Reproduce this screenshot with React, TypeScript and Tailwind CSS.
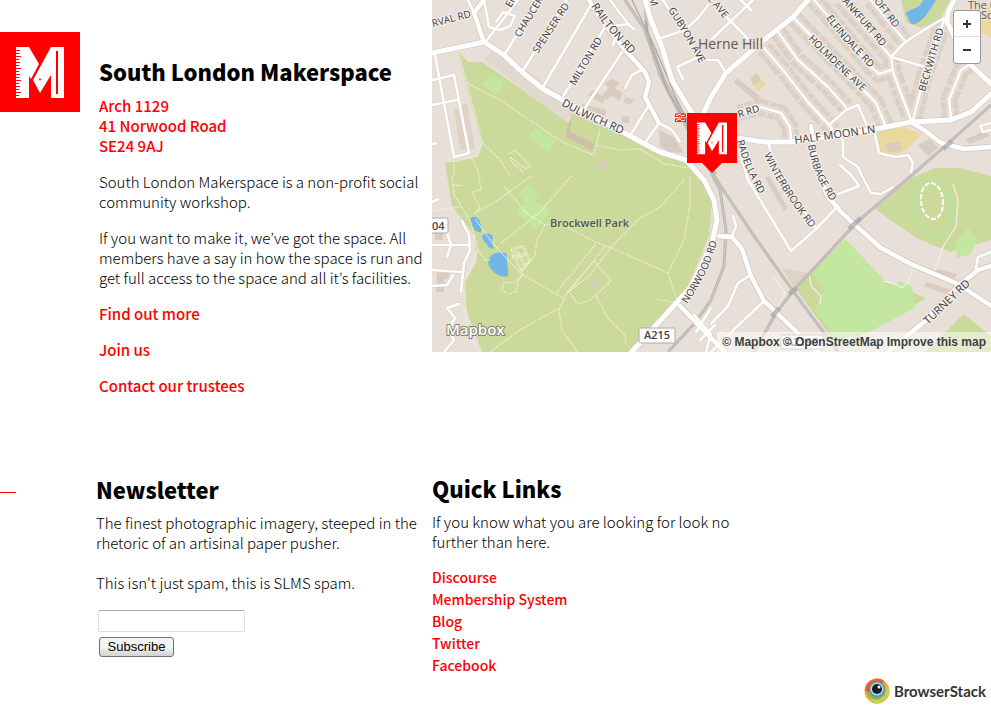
import React from "react";

const sans = "font-['Noto_Sans_CJK_JP','Open_Sans',sans-serif]";

function MakerMark({ className }: { className?: string }) {
  return (
    <svg viewBox="0 0 80 80" className={className} aria-hidden="true">
      <rect width="80" height="80" fill="#ff0000" />
      <path d="M16 15H29L39 32L31 47L29 44V66H16Z" fill="#fff" />
      <path d="M51 15H64V66H51V43L40 61L33 48Z" fill="#fff" />
      <path d="M57 19V62" stroke="#ff0000" strokeWidth="2" />
      <path
        d="M16 18.5h4M16 21.5h3M16 24.5h5M16 27.5h3M16 30.5h4M16 33.5h3M16 36.5h5M16 39.5h3M16 42.5h4M16 45.5h3M16 48.5h5M16 51.5h3M16 54.5h4M16 57.5h3M16 60.5h5M16 63.5h3"
        stroke="#ff0000"
        strokeWidth="1.2"
      />
      <circle cx="40" cy="47.5" r="1" fill="#ff0000" />
    </svg>
  );
}

/* Streets lined with houses; the same lines are reused for blocks and roads. */
const terraces = [
  "M764 48L783 70L808 102L829 125L833 130",
  "M778 32L798 60L828 87L846 107",
  "M794 18L854 80L876 103L886 127",
  "M814 0L829 17L871 67L879 74L891 70",
  "M841 0L891 57",
  "M871 0L904 40",
  "M913 120L924 77L944 20",
  "M891 57L893 72L911 120",
  "M738 113L761 107L781 113L790 127L791 140",
  "M951 118L949 100L961 70L969 65",
];

const streets = [
  "M829 125L846 110L858 105L868 128",
  "M891 57L904 43L924 30L944 18",
  "M891 57L926 67",
  "M504 55L539 0",
  "M522 72L567 0",
  "M543 87L592 3",
  "M562 98L605 27L629 24",
  "M585 108L622 52",
  "M630 136L649 105",
  "M645 143L659 123",
  "M659 123L672 130L680 142",
  "M625 88L632 75L641 70",
  "M610 0L629 25L634 29M613 45L616 36",
  "M435 55L454 157L469 153L454 75L432 80M432 105L457 100",
  "M484 0L489 27L500 30L510 26L515 16L503 12L496 22",
  "M518 0L487 40M474 13L468 0",
  "M661 38L685 30L699 17L712 0M663 0L672 14L699 58",
  "M677 67L698 57M677 67L683 79M698 60L718 60L726 73",
  "M711 40L753 0M717 7L749 40M741 0L751 10",
  "M874 130L879 153L895 157L908 155L913 163L911 172",
  "M831 130L843 140L843 157L858 167L862 176L871 193L881 194L893 187",
  "M768 141L774 165L816 229",
  "M738 147L748 180L791 251L816 229L838 206",
  "M838 194L859 186L852 176L840 165",
  "M732 236L736 226L733 216",
  "M749 276L738 283L728 306L711 324",
  "M764 301L724 339L711 352",
  "M462 221L469 235L470 250L464 263L461 292M432 245L470 245M432 270L461 272",
  "M447 232L451 245L447 257M432 286L447 285L453 275",
  "M459 304L447 308L455 318L448 330L454 340L444 352",
  "M432 144L436 143M432 202L438 199",
  "M694 315L711 334L706 352M711 308L696 332M700 340L715 325",
  "M976 268L978 257L991 252",
  "M991 123L980 126L983 132L991 130",
];

const avenues = [
  "M484 0L474 13L484 42",
  "M589 0L599 17L625 50L645 72L649 82L645 97L659 123",
  "M719 236L732 237L742 249L751 276L764 301L778 314L826 360",
  "M811 126L816 165L827 195L840 211L854 224L881 248L911 264L958 284L991 306",
  "M880 358L924 322L958 286L978 270L991 266",
  "M911 122L924 130L941 143L964 149L991 147",
  "M680 306L711 338L725 352",
];

const mains = [
  "M432 53L484 42L504 55L522 72L543 89L570 104L630 136L660 152L686 160L706 162",
  "M645 0L651 20L662 47L672 80L692 113L706 130L710 150",
  "M688 162L704 180L714 200L717 220L712 243L690 288L628 356",
  "M704 112L711 97L726 73L764 40L793 17L808 0",
  "M737 138L764 142L791 142L871 130L911 122L951 120L971 112L991 94",
  "M954 0L948 12L947 22L956 40L971 65L991 84",
];

const rails = [
  "M625 0L645 30L660 75L688 130L714 176L752 233L793 291L838 352",
  "M645 0L647 32L664 80L692 134L720 190L726 230L724 266L711 300L694 324L668 352",
  "M991 105L944 147L911 176L858 221L793 291L776 313L754 352",
];

const footpaths = [
  "M458 51L467 83L482 142L500 160L510 176M467 83L500 100L562 142L593 155",
  "M482 142L478 156L454 162L454 176M472 159L478 170L481 190L472 192L480 208L474 214L498 200L512 190L531 176",
  "M505 187L525 212L545 225M571 176L540 212L500 244",
  "M432 211L459 207M453 185L463 186M452 176L454 195L470 220L478 250L472 265L465 280L466 330L480 352",
  "M476 220L490 240L510 262L523 275L563 298M478 250L485 260L491 260",
  "M523 275L514 282L504 283L502 290L508 294L516 292L518 282L523 270L535 255L537 240L545 225L563 225L595 242L612 248L668 273L678 303L656 299M668 273L684 240L690 205L690 176M684 180L660 207L640 218L612 246L590 275L567 293L559 310L562 330L577 352",
  "M595 245L556 293M605 247L569 292L578 304L590 300L611 281L594 261L567 292M596 296L608 318L625 335L626 345M559 308L520 330L490 352",
  "M600 130L596 145L620 150L640 149L665 164L690 168M593 155L597 145",
  "M509 154L515 150L530 166L526 169L510 157L513 163L523 172",
];

const parkGreens = [
  "M457 50L468 62L482 62L520 88L568 123L572 113L600 124L630 137L660 153L684 162L692 167L704 184L712 204L709 236L688 286L628 352L482 352L466 309L464 283L477 262L475 236L452 206L445 163L477 157L482 145Z",
  "M912 178L875 209L918 239L950 252L991 240V176L960 168L935 168Z",
  "M845 239L810 274L797 290L833 340L860 336L926 298L885 281Z",
  "M964 314L991 336V352H925Z",
  "M901 0L906 22L921 28L940 20L950 0Z",
];

const lawns = [
  "M492 75L504 82L495 96L482 84Z",
  "M535 128L556 140L549 153L529 137Z",
  "M528 184L539 193L534 201L551 210L537 230L516 213L525 203L519 193Z",
  "M845 239L812 273L825 288L815 311L834 336L869 332L915 308L912 286L900 281L890 287L878 275Z",
  "M968 227L977 240L971 254L957 258L955 244Z",
];

const blocks = [
  "M612 79L620 83L615 88L623 93L619 101L611 96L607 100L602 96L608 88L604 83Z",
  "M592 90L606 98L602 104L588 95ZM582 104L607 110L605 116L580 108Z",
  "M625 97L634 100L630 105L624 102ZM621 117L629 116L629 123L622 123Z",
  "M659 130L674 137L684 153L670 152L660 146Z",
  "M886 144L900 142L901 151L888 152Z",
  "M737 78L760 96L757 102L734 83ZM751 76L758 75L761 81L753 85Z",
  "M918 145L930 139L938 148L928 156Z",
  "M937 269L957 274L955 278L933 274ZM927 282L955 291L952 296L924 286Z",
  "M765 178L769 176L788 208L784 211ZM966 139L985 131L990 136L970 144Z",
  "M594 279L601 282L596 288L591 285ZM598 163L607 160L604 171L598 169Z",
  "M435 230H443V240H435ZM437 273H449V279H444V292H436Z",
];

type Label = { d: string; text: string; size?: number };

const labels: Label[] = [
  { d: "M433 27L471 17", text: "RVAL RD" },
  { d: "M511 8L522 -12", text: "EF" },
  { d: "M520 38L548 -8", text: "CHAUCER" },
  { d: "M538 54L572 2", text: "SPENSER RD" },
  { d: "M575 86L607 32", text: "MILTON RD" },
  { d: "M591 6C603 26 617 40 636 60", text: "RAILTON RD", size: 11 },
  { d: "M561 105C580 117 600 124 632 139", text: "DULWICH RD", size: 11 },
  { d: "M649 -2L653 12", text: "M" },
  { d: "M668 10C680 28 689 43 704 72", text: "GUBYON AVE" },
  { d: "M704 -5L735 32", text: "LL AVE" },
  { d: "M808 39C825 57 842 73 868 97", text: "HOLMDENE AVE" },
  { d: "M826 18C836 34 855 51 879 78", text: "ELFINDALE RD" },
  { d: "M838 -3L888 54", text: "RANKFURT RD" },
  { d: "M870 -4L902 38", text: "ROFT RD" },
  { d: "M925 92L945 25", text: "BECKWITH RD" },
  { d: "M739 118L770 108", text: "R RD" },
  { d: "M795 144L881 132", text: "HALF MOON LN", size: 11 },
  { d: "M737 141C742 160 750 181 768 208", text: "RADELLA RD" },
  { d: "M764 155C774 177 789 201 815 234", text: "WINTERBROOK RD" },
  { d: "M808 145C811 165 818 184 840 214", text: "BURBAGE RD" },
  { d: "M687 304C703 281 715 257 721 225", text: "NORWOOD RD" },
  { d: "M928 325L974 281", text: "TURNEY RD", size: 11 },
];

function StreetMap() {
  return (
    <svg
      viewBox="432 0 559 352"
      preserveAspectRatio="xMidYMid slice"
      className="block h-full w-full"
      role="img"
      aria-label="Map of Herne Hill and Brockwell Park"
    >
      <rect x="432" width="559" height="352" fill="#e8e0d8" />
      <path d="M484 60L495 48L600 122L571 115L566 122L525 90Z" fill="#e1d8ce" />
      <path d="M782 268L808 273L795 290ZM454 110L467 103L475 149L460 150Z" fill="#ded3c4" />
      <path d="M750 80L756 72L766 85L758 92ZM874 130L903 127L922 134L911 145L901 153L882 157ZM978 12L991 6V38L983 33Z" fill="#e9d99c" />
      {parkGreens.map((d) => (
        <path key={d} d={d} fill="#cbd99b" />
      ))}
      {lawns.map((d) => (
        <path key={d} d={d} fill="#c3e79f" />
      ))}
      <path d="M568 124L571 120L570 132L593 143L597 136L592 150L565 137Z" fill="#cfbfa9" />
      <ellipse cx="933" cy="209" rx="18" ry="29" fill="none" stroke="#bfe09c" strokeWidth="5" transform="rotate(-10 933 209)" />
      <ellipse cx="932" cy="201" rx="11" ry="18" fill="none" stroke="#fff" strokeWidth="2" strokeDasharray="5 2" transform="rotate(-6 932 201)" />
      <path
        d="M470 219C474 214 480 218 480 223C484 231 481 234 476 231C473 228 472 226 470 219ZM482 236C487 231 493 234 493 238C491 243 494 246 493 249L488 247C487 242 482 241 482 236ZM488 261C491 252 500 251 506 253C508 259 506 263 508 268V276C500 279 488 270 488 261ZM905 14C913 6 918 11 923 0L936 0C931 8 925 20 915 24C908 26 910 16 905 14Z"
        fill="#73b6e6"
      />
      {terraces.map((d) => (
        <path key={d} d={d} fill="none" stroke="#dcd0c4" strokeWidth="17" strokeDasharray="7 1 9 1 12 2" />
      ))}
      {terraces.map((d) => (
        <path key={d} d={d} fill="none" stroke="#e8e0d8" strokeWidth="7" />
      ))}
      {blocks.map((d) => (
        <path key={d} d={d} fill="#d9cbbf" />
      ))}
      <path d="M511 249L523 246L530 261L521 270Z" fill="none" stroke="#f2f2d9" strokeWidth="3" strokeDasharray="1 1.5" />
      <path d="M516 251L525 265M512 257L527 254" fill="none" stroke="#f2f2d9" strokeWidth="4" strokeDasharray="1 1.5" />
      {footpaths.map((d) => (
        <path key={d} d={d} fill="none" stroke="#f4f4df" strokeWidth="1.4" strokeDasharray="1.3 1.3" />
      ))}
      <path d="M953 184L958 200L956 226L943 247L935 270M883 281L895 284L902 288L908 282L913 270M809 274L811 286L821 296L820 304M773 277L785 293L775 313" fill="none" stroke="#f1efe4" strokeWidth="1.3" />
      {rails.map((d) => (
        <g key={d} fill="none">
          <path d={d} stroke="#b9b5b1" strokeWidth="3" />
          <path d={d} stroke="#d8d3ce" strokeWidth="0.8" />
        </g>
      ))}
      <path d="M645 20L652 48L668 92L690 128L716 174M632 0L656 50L676 98L698 142" fill="none" stroke="#aaa7a5" strokeWidth="1.2" />
      <g fill="none" strokeLinejoin="round" strokeLinecap="round">
        {[...streets, ...terraces].map((d) => (
          <path key={d} d={d} stroke="#d8cfc6" strokeWidth="3.8" />
        ))}
        {[...avenues, ...mains].map((d) => (
          <path key={d} d={d} stroke="#d5ccc3" strokeWidth="6.4" />
        ))}
        {[...streets, ...terraces].map((d) => (
          <path key={d} d={d} stroke="#fff" strokeWidth="2.6" />
        ))}
        {avenues.map((d) => (
          <path key={d} d={d} stroke="#fff" strokeWidth="4.4" />
        ))}
        {mains.map((d) => (
          <path key={d} d={d} stroke="#fff" strokeWidth="5" />
        ))}
      </g>
      <path d="M849 229L861 218M772 317L779 308M789 294L797 288M943 149L952 141" stroke="#aaa" strokeOpacity="0.75" strokeWidth="5" />
      <g
        className="font-['Open_Sans','Noto_Sans',sans-serif]"
        fill="#38373a"
        stroke="#f6f2ee"
        strokeOpacity="0.9"
        strokeWidth="2.5"
        paintOrder="stroke"
        strokeLinejoin="round"
        fontWeight="500"
      >
        {labels.map((l, i) => (
          <g key={l.text}>
            <path id={`road-${i}`} d={l.d} fill="none" stroke="none" />
            <text fontSize={l.size ?? 10}>
              <textPath href={`#road-${i}`}>{l.text}</textPath>
            </text>
          </g>
        ))}
        <text x="698" y="49" fontSize="14" fill="#6a5849" stroke="#e8e0d8" fontWeight="400">Herne Hill</text>
        <text x="550" y="227" fontSize="11" fontWeight="600" fill="#555" stroke="#d3dfa9">Brockwell Park</text>
        <text x="968" y="9" fontSize="11" fill="#6a5849" stroke="#e8e0d8">The C</text>
        <text x="981" y="19" fontSize="11" fill="#6a5849" stroke="#e8e0d8">Sc</text>
      </g>
      <g className="font-['Open_Sans','Noto_Sans',sans-serif]" fontSize="11" fontWeight="600" fill="#444">
        <rect x="639" y="328" width="36" height="15" rx="1.5" fill="#fff" stroke="#aaa" />
        <text x="644" y="339">A215</text>
        <rect x="420" y="218" width="28" height="15" rx="1.5" fill="#fff" stroke="#aaa" />
        <text x="432" y="230">04</text>
        <rect x="781" y="335" width="42" height="14" rx="1.5" fill="#fff" stroke="#aaa" />
        <text x="786" y="346">A2199</text>
      </g>
      <path d="M675 113.500H686V117H675ZM675 118.500H686V122H675Z" fill="#ff2414" />
      <path d="M676 115.500L680 114.500L682 116L685 115M676 120.500L680 119L682 121L685 120" stroke="#fff" fill="none" />
      <text
        x="446"
        y="335"
        fontSize="15"
        fontWeight="600"
        fill="#fff"
        stroke="#7f8270"
        strokeWidth="2"
        strokeLinejoin="round"
        paintOrder="stroke"
        className="font-['Open_Sans','Noto_Sans',sans-serif]"
      >
        Mapbox
      </text>
    </svg>
  );
}

function Marker() {
  return (
    <div className="absolute top-[113px] left-1/2 ml-[-25px] flex w-[50px] flex-col items-center">
      <MakerMark className="block size-[50px]" />
      <svg viewBox="0 0 20 10" className="block h-[10px] w-5" aria-hidden="true">
        <path d="M0 0H20L10 10Z" fill="#ff0000" />
      </svg>
    </div>
  );
}

function BrowserStack() {
  return (
    <a href="#browserstack" className="flex items-center gap-1 font-['Lato',sans-serif] text-[15px] leading-7 font-bold text-[#333]">
      <svg viewBox="0 0 26 26" className="size-[26px]" aria-hidden="true">
        <circle cx="13" cy="13" r="12.500" fill="#f3aa3c" />
        <path d="M1 13A12 12 0 0 1 20 3L13 13Z" fill="#e8663f" />
        <path d="M25 10A12.500 12.500 0 0 1 5 23L13 12Z" fill="#c9cf52" />
        <circle cx="12" cy="12" r="9.500" fill="#e4593a" />
        <path d="M3 15A9.500 9.500 0 0 0 21 14L12 10Z" fill="#8dbb5c" />
        <circle cx="13" cy="11.500" r="8" fill="#3fa9b5" />
        <circle cx="13" cy="11" r="6.500" fill="#b9dce6" />
        <circle cx="13" cy="11" r="5" fill="#1d1b22" />
        <circle cx="15" cy="9" r="1.500" fill="#fff" />
      </svg>
      BrowserStack
    </a>
  );
}

const quickLinks = ["Discourse", "Membership System", "Blog", "Twitter", "Facebook"];
const heading = "text-[22px] leading-8 font-black text-black";
const link = "font-medium text-[#ff0000]";

export default function App() {
  return (
    <main className={`${sans} bg-white text-[15px] leading-5 font-light text-black`}>
      <section className="flex">
        <MakerMark className="mt-8 block size-20 shrink-0" />
        <div className="w-[352px] shrink-0 pt-[55px] pr-2 pl-[19px]">
          <h1 className={heading}>South London Makerspace</h1>
          <address className={`mt-[9px] not-italic ${link}`}>
            Arch 1129
            <br />
            41 Norwood Road
            <br />
            SE24 9AJ
          </address>
          <p className="mt-4">South London Makerspace is a non-profit social community workshop.</p>
          <p className="mt-4">
            If you want to make it, we’ve got the space. All members have a say in how the space is run and get full
            access to the space and all it’s facilities.
          </p>
          <nav className="mt-4 flex flex-col items-start gap-4">
            <a href="#about" className={link}>Find out more</a>
            <a href="#join" className={link}>Join us</a>
            <a href="#trustees" className={link}>Contact our trustees</a>
          </nav>
        </div>
        <div className="relative h-[352px] flex-1 overflow-hidden">
          <StreetMap />
          <Marker />
          <div className="absolute top-[10px] right-[10px] flex w-7 flex-col overflow-hidden rounded-[3px] border border-[#999] bg-white">
            <button type="button" aria-label="Zoom in" className="flex h-[26px] items-center justify-center border-b border-[#ddd]">
              <svg viewBox="0 0 8 8" className="size-2" aria-hidden="true">
                <path d="M4 0V8M0 4H8" stroke="#333" strokeWidth="2" />
              </svg>
            </button>
            <button type="button" aria-label="Zoom out" className="flex h-[26px] items-center justify-center">
              <svg viewBox="0 0 8 8" className="size-2" aria-hidden="true">
                <path d="M0 4H8" stroke="#333" strokeWidth="2" />
              </svg>
            </button>
          </div>
          <div className="absolute right-0 bottom-0 flex gap-[3px] bg-white/50 px-[5px] font-['Liberation_Sans',sans-serif] text-[12px] leading-5 font-bold text-[#404040]">
            <a href="#mapbox">© Mapbox</a>
            <a href="#osm">© OpenStreetMap</a>
            <a href="#improve">Improve this map</a>
          </div>
        </div>
      </section>

      <section className="mt-[76px] flex">
        <div className="mt-5 h-px w-4 shrink-0 bg-[#ff0000]" />
        <form className="w-[416px] shrink-0 pt-px pr-2 pl-20" onSubmit={(e) => e.preventDefault()}>
          <h2 className={heading}>Newsletter</h2>
          <p className="mt-2">
            <label htmlFor="email">
              The finest photographic imagery, steeped in the rhetoric of an artisinal paper pusher.
            </label>
          </p>
          <p className="mt-5">This isn't just spam, this is SLMS spam.</p>
          <div className="mt-[17px] flex flex-col items-start gap-[5px] pl-[2px] font-['Liberation_Sans',sans-serif] font-normal">
            <input
              id="email"
              type="email"
              className="h-[22px] w-[147px] rounded-[2px] border border-[#dcdce6] border-t-[#a5a5a8] px-1 text-[13px]"
            />
            <button
              type="submit"
              className="ml-px h-5 w-[75px] rounded-[3px] border border-[#707070] bg-linear-to-b from-[#f3f3f3] from-50% to-[#d2d2d2] text-[13px] leading-4"
            >
              Subscribe
            </button>
          </div>
        </form>
        <div className="flex flex-1 flex-col">
          <h2 className={heading}>Quick Links</h2>
          <p className="mt-2 max-w-[300px]">If you know what you are looking for look no further than here.</p>
          <ul className="mt-[14px] text-[14px] leading-[22px]">
            {quickLinks.map((name) => (
              <li key={name}>
                <a href={`#${name.toLowerCase().replace(" ", "-")}`} className={link}>
                  {name}
                </a>
              </li>
            ))}
          </ul>
          <div className="mt-px mr-[5px] self-end">
            <BrowserStack />
          </div>
        </div>
      </section>
    </main>
  );
}
